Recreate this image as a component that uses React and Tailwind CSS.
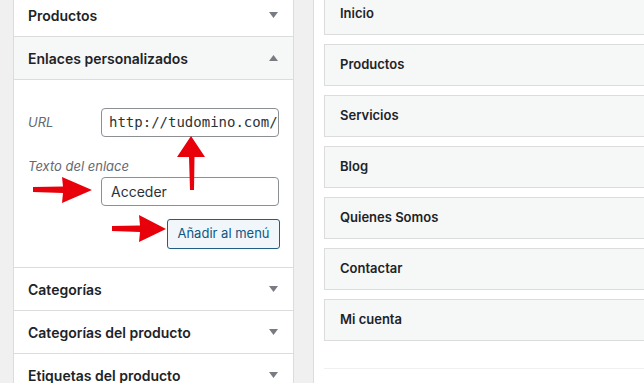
import React from "react";

const font = { fontFamily: "Inter, 'Liberation Sans', sans-serif" };

function Caret({ up }) {
  return (
    <svg width="9" height="6" viewBox="0 0 9 6" className="shrink-0">
      {up ? (
        <polygon points="0,6 9,6 4.5,0" fill="#787c82" />
      ) : (
        <polygon points="0,0 9,0 4.5,6" fill="#787c82" />
      )}
    </svg>
  );
}

function Header({ title, up, gray, extra = "" }) {
  return (
    <div
      className={`flex h-[43px] shrink-0 items-center justify-between border-b border-[#dcdcde] pl-[14px] pr-[15px] ${gray ? "bg-[#f6f7f7]" : "bg-white"} ${extra}`}
    >
      <span className="text-[14px] font-semibold text-[#1d2327]">{title}</span>
      <Caret up={up} />
    </div>
  );
}

const items = ["Inicio", "Productos", "Servicios", "Blog", "Quienes Somos", "Contactar", "Mi cuenta"];

export default function App() {
  return (
    <div className="relative flex h-[383px] w-[644px] overflow-hidden bg-[#f0f0f1]" style={font}>
      <div className="w-[13px] shrink-0" />
      <div className="-mt-[6px] flex w-[281px] shrink-0 flex-col border-x border-[#dcdcde] bg-white">
        <Header title="Productos" />
        <Header title="Enlaces personalizados" up gray />
        <div className="flex h-[188px] shrink-0 flex-col border-b border-[#dcdcde] bg-white pl-[14px] pr-[14px] pt-[28px]">
          <div className="flex items-center justify-between">
            <span className="text-[13px] italic text-[#646970]">URL</span>
            <div className="flex h-[29px] w-[178px] items-center overflow-hidden rounded-[4px] border border-[#8c8f94] bg-white pl-[7px]">
              <span
                className="whitespace-nowrap text-[14px] text-[#2c3338]"
                style={{ fontFamily: "'DejaVu Sans Mono', monospace" }}
              >
                http://tudomino.com/
              </span>
            </div>
          </div>
          <div className="mt-[21px] text-[13px] italic leading-[16px] text-[#646970]">Texto del enlace</div>
          <div className="mt-[3px] flex justify-end">
            <div className="flex h-[29px] w-[178px] items-center rounded-[4px] border border-[#8c8f94] bg-white pl-[9px] text-[14px] text-[#2c3338]">
              Acceder
            </div>
          </div>
          <div className="mt-[13px] flex justify-end">
            <div className="mr-[-1px] flex h-[30px] w-[113px] items-center justify-center rounded-[3px] border border-[#1e5f86] bg-[#f0f6fa] text-[13px] text-[#0f5683]">
              Añadir al menú
            </div>
          </div>
        </div>
        <Header title="Categorías" />
        <Header title="Categorías del producto" />
        <Header title="Etiquetas del producto" />
      </div>
      <div className="w-[19px] shrink-0" />
      <div className="flex flex-1 flex-col border-l border-[#dcdcde] bg-white pl-[10px]">
        <div className="-mt-[7px] flex shrink-0 flex-col gap-[9px]">
          {items.map((t) => (
            <div
              key={t}
              className="-mr-[10px] flex h-[42px] shrink-0 items-center border border-[#dcdcde] bg-[#f6f7f7] pl-[15px] text-[13px] font-semibold text-[#1d2327]"
            >
              {t}
            </div>
          ))}
        </div>
        <div className="mt-[27px] border-t border-[#f0f0f1]" />
      </div>
      <svg className="pointer-events-none absolute left-0 top-0" width="644" height="383">
        <g fill="#e8000b">
          <polygon points="191,136 177,157 189,157 190,190 194,190 194.5,157 205,157" />
          <polygon points="33,187 63,186.5 62,177 92,190 62,203 63,193 33,192" />
          <polygon points="112,226 140,225.5 139,215 166,229 139,242 140,232 112,231" />
        </g>
      </svg>
    </div>
  );
}
